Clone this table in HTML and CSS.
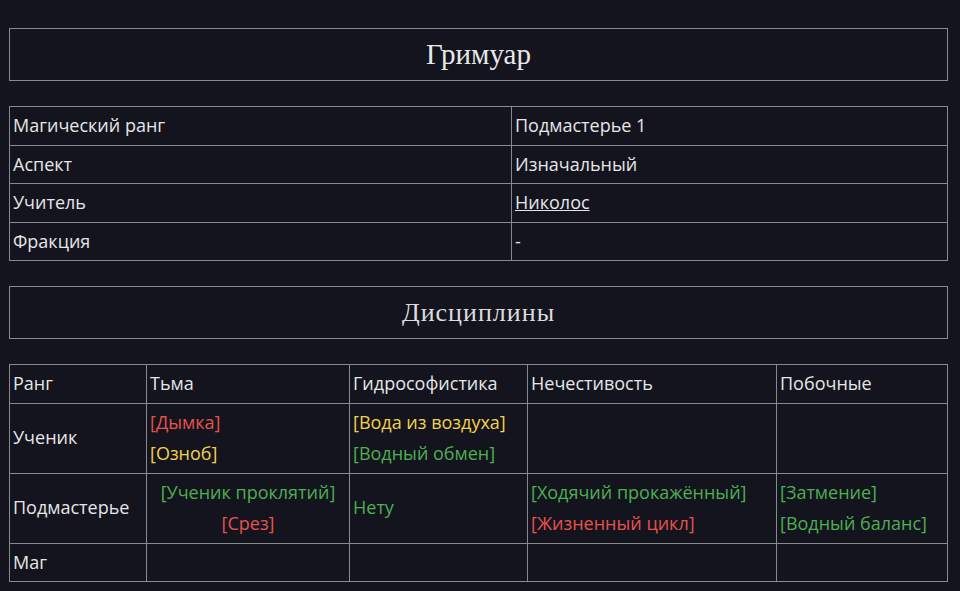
FILE: index.html
```html
<!DOCTYPE html>
<html lang="ru">
<head>
<meta charset="utf-8">
<title>Гримуар</title>
<link rel="stylesheet" href="styles.css">
</head>
<body>
<div class="page">
  <div class="title-box">Гримуар</div>
  <table class="info">
    <colgroup><col class="info-c1"><col></colgroup>
    <tr><td>Магический ранг</td><td>Подмастерье 1</td></tr>
    <tr><td>Аспект</td><td>Изначальный</td></tr>
    <tr><td>Учитель</td><td><a href="#" class="link">Николос</a></td></tr>
    <tr><td>Фракция</td><td>-</td></tr>
  </table>
  <div class="title-box title-alt">Дисциплины</div>
  <table class="disc">
    <colgroup>
      <col class="d1"><col class="d2"><col class="d3"><col class="d4"><col class="d5">
    </colgroup>
    <tr><td>Ранг</td><td>Тьма</td><td>Гидрософистика</td><td>Нечестивость</td><td>Побочные</td></tr>
    <tr>
      <td>Ученик</td>
      <td><div class="red">[Дымка]</div><div class="yellow">[Озноб]</div></td>
      <td><div class="yellow">[Вода из воздуха]</div><div class="green">[Водный обмен]</div></td>
      <td></td>
      <td></td>
    </tr>
    <tr>
      <td>Подмастерье</td>
      <td class="center"><div class="green">[Ученик проклятий]</div><div class="red">[Срез]</div></td>
      <td><div class="green">Нету</div></td>
      <td><div class="green">[Ходячий прокажённый]</div><div class="red">[Жизненный цикл]</div></td>
      <td><div class="green">[Затмение]</div><div class="green">[Водный баланс]</div></td>
    </tr>
    <tr><td>Маг</td><td></td><td></td><td></td><td></td></tr>
  </table>
</div>
</body>
</html>
```

FILE: styles.css
```css
html, body {
  margin: 0;
  padding: 0;
  background: #14141f;
}
body {
  font-family: "Open Sans", "Noto Sans", sans-serif;
  font-size: 18px;
  color: #e6e6e6;
}
.page {
  padding: 28px 12px 0 9px;
  display: flex;
  flex-direction: column;
}
.title-box {
  border: 1px solid #8a8a8a;
  height: 51px;
  display: flex;
  align-items: center;
  justify-content: center;
  font-family: "Liberation Serif", serif;
  font-size: 29px;
  color: #e8e8e8;
  margin-bottom: 25px;
}
.title-alt {
  font-size: 26px;
  letter-spacing: 1px;
  color: #dcdcdc;
}
table {
  border-collapse: collapse;
  width: 100%;
  table-layout: fixed;
  margin-bottom: 25px;
}
td {
  border: 1px solid #8a8a8a;
  padding: 3px 3px;
  line-height: 31.5px;
  vertical-align: middle;
  text-align: left;
}
.info-c1 { width: 502px; }
.d1 { width: 137px; }
.d2 { width: 203px; }
.d3 { width: 178px; }
.d4 { width: 249px; }
.d5 { width: 171px; }
.center { text-align: center; }
.red { color: #e5524a; }
.yellow { color: #f2d04c; }
.green { color: #4caf50; }
.link { color: #e6e6e6; text-decoration: underline; }
```
